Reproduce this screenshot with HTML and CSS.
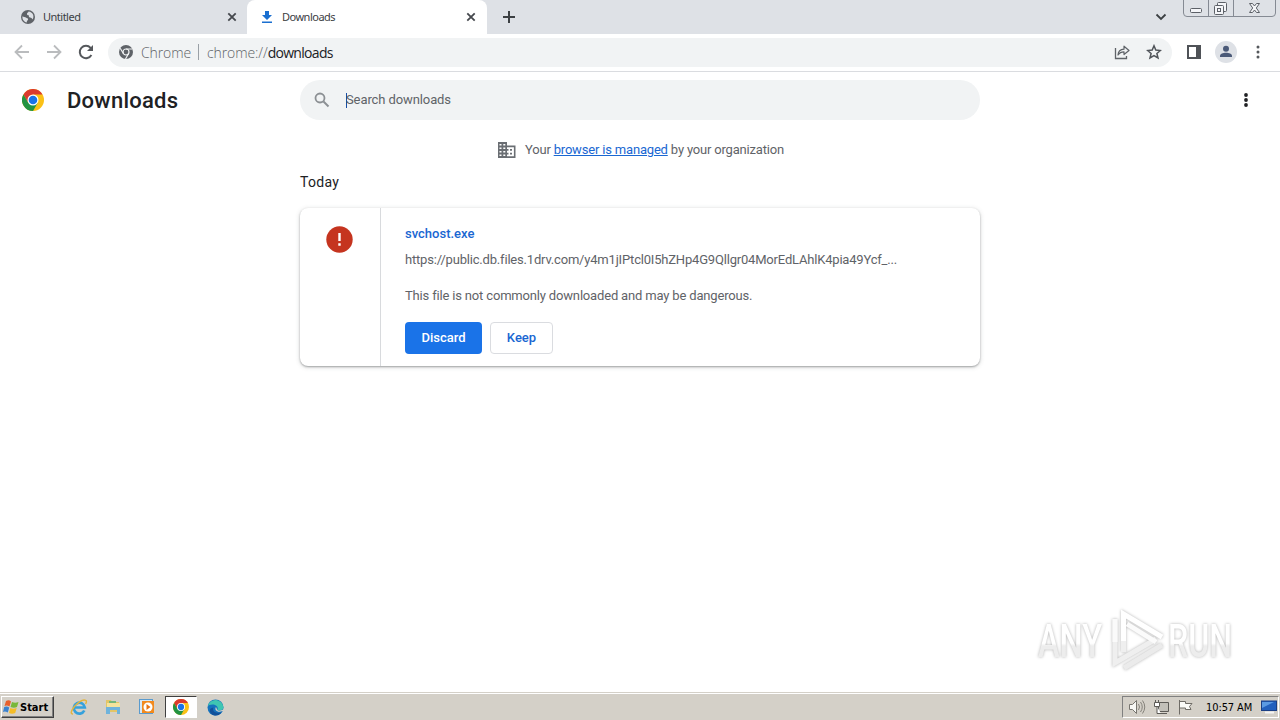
FILE: index.html
```html
<!DOCTYPE html>
<html lang="en">
<head>
    <meta charset="UTF-8">
    <meta name="viewport" content="width=device-width, initial-scale=1.0">
    <title>Downloads</title>
    <link rel="stylesheet" href="styles.css">
</head>
<body>
    <svg width="0" height="0" class="defs">
        <symbol id="chrome-logo" viewBox="0 0 24 24">
            <circle cx="12" cy="12" r="12" fill="#fbc116"/>
            <path d="M1.6 6A12 12 0 0 1 22.4 6H12L6.8 15Z" fill="#db3a2e"/>
            <path d="M1.6 6A12 12 0 0 0 12 24L17.2 15H6.8Z" fill="#229342"/>
            <circle cx="12" cy="12" r="6" fill="#fff"/>
            <circle cx="12" cy="12" r="4.7" fill="#1a73e8"/>
        </symbol>
        <symbol id="close" viewBox="0 0 10 10">
            <path d="M1.3 1.3L8.7 8.7M8.7 1.3L1.3 8.7" stroke="#45484d" stroke-width="1.8" fill="none"/>
        </symbol>
    </svg>

    <header class="tab-strip">
        <div class="tab">
            <svg class="favicon" width="16" height="16" viewBox="0 0 16 16">
                <circle cx="8" cy="8" r="7" fill="#5f6368"/>
                <path d="M2.5 7.2C3.5 8 5.2 7.7 6 8.6C6.6 9.3 8.2 9 8.1 10.3C8 11.4 6.8 11.5 6.7 13.5C4 12.8 2 10.5 2.5 7.2ZM8.5 2.5C10.5 2.7 12 3.7 13 5.5C13.7 7.4 13.4 9 12.7 10.5C12.2 9.3 11.4 8.6 10 8.4C9 8.2 8.6 7.3 9 6.4C7.8 6.3 6.6 5.5 7 4.4C7.3 3.7 8.3 3.6 8.5 2.5Z" fill="#dee1e6"/>
            </svg>
            <span class="tab-title">Untitled</span>
            <svg class="tab-close" width="10" height="10"><use href="#close"/></svg>
        </div>
        <div class="tab active">
            <svg class="favicon" width="16" height="16" viewBox="0 0 16 16">
                <path d="M6 2H10V6H13L8 11L3 6H6ZM3 12.5H13V14H3Z" fill="#1a6fd0"/>
            </svg>
            <span class="tab-title">Downloads</span>
            <svg class="tab-close" width="10" height="10"><use href="#close"/></svg>
        </div>
        <svg class="new-tab" width="14" height="14" viewBox="0 0 14 14">
            <path d="M7 1V13M1 7H13" stroke="#3c4043" stroke-width="2"/>
        </svg>
        <svg class="tab-search" width="12" height="8" viewBox="0 0 12 8">
            <path d="M1.5 1.5L6 6L10.5 1.5" stroke="#3c4043" stroke-width="1.8" fill="none"/>
        </svg>
        <svg class="window-buttons" width="94" height="18" viewBox="0 0 94 18">
            <path d="M.5 0V13Q.5 16.5 4 16.5H89Q92.5 16.5 92.5 13V0M25.5 0V16.5M50.5 0V16.5" fill="none" stroke="#858a93"/>
            <g fill="#f4f5f8" stroke="#5c6067">
                <rect x="7.5" y="8.5" width="11" height="4" rx="1"/>
                <rect x="34.500" y="2.5" width="9" height="9" rx="1"/>
                <rect x="31.5" y="5.5" width="9" height="9" rx="1"/>
                <rect x="34.5" y="8.5" width="3" height="3"/>
                <path d="M66.500 3.500H69.500L71.500 6L73.500 3.500H76.500L73.300 8L76.500 12.500H73.500L71.500 10L69.500 12.500H66.500L69.700 8Z"/>
            </g>
        </svg>
    </header>

    <nav class="toolbar">
        <svg class="nav-icon" width="16" height="16" viewBox="0 0 16 16">
            <path d="M15 8H2M8 1.5L1.5 8L8 14.5" fill="none" stroke="#babcbe" stroke-width="1.8"/>
        </svg>
        <svg class="nav-icon" width="16" height="16" viewBox="0 0 16 16">
            <path d="M1 8H14M8 1.5L14.5 8L8 14.5" fill="none" stroke="#babcbe" stroke-width="1.8"/>
        </svg>
        <svg class="nav-icon" width="16" height="16" viewBox="0 0 16 16">
            <path d="M13.4 11A6.2 6.2 0 1 1 12.6 3.8L14 5.2" fill="none" stroke="#55585c" stroke-width="2"/>
            <path d="M15 1V7H9Z" fill="#55585c"/>
        </svg>
        <div class="omnibox">
            <svg width="14" height="14" viewBox="0 0 14 14">
                <circle cx="7" cy="7" r="7" fill="#5f6368"/>
                <circle cx="7" cy="7" r="3" fill="none" stroke="#f1f3f4" stroke-width="1.2"/>
                <path d="M7 4H13.5M4.4 8.5L1.2 3.3M9.6 8.5L6.5 14" stroke="#f1f3f4" stroke-width="1.2"/>
            </svg>
            <span class="site">Chrome</span>
            <span class="divider"></span>
            <span class="url">chrome://<b>downloads</b></span>
            <svg class="share" width="16" height="16" viewBox="0 0 16 16">
                <path d="M1.5 4V14.5H12.5V12" fill="none" stroke="#5f6368" stroke-width="1.3"/>
                <path d="M4 11C4.2 7.5 6.5 5.3 10 5.2V2.2L15 6.5L10 10.5V7.8C7.3 7.8 5.3 8.9 4 11Z" fill="none" stroke="#5f6368" stroke-width="1.2" stroke-linejoin="round"/>
            </svg>
            <svg class="star" width="16" height="16" viewBox="0 0 16 16">
                <path d="M8 1.8L9.8 6.1L14.4 6.5L10.9 9.5L12 14L8 11.6L4 14L5.1 9.5L1.6 6.5L6.2 6.1Z" fill="none" stroke="#505459" stroke-width="1.5"/>
            </svg>
        </div>
        <svg class="side-panel" width="14" height="14" viewBox="0 0 14 14">
            <path d="M0 0H14V14H0ZM2 2V12H9V2Z" fill="#4f5257" fill-rule="evenodd"/>
        </svg>
        <svg class="avatar" width="22" height="22" viewBox="0 0 22 22">
            <circle cx="11" cy="11" r="11" fill="#dee1e6"/>
            <circle cx="11" cy="7.8" r="3" fill="#4b5a78"/>
            <path d="M5 16V15C5 13 8 11.8 11 11.8S17 13 17 15V16Z" fill="#4b5a78"/>
        </svg>
        <svg class="menu" width="4" height="14" viewBox="0 0 4 14" fill="#55585c">
            <circle cx="2" cy="2" r="1.5"/><circle cx="2" cy="7" r="1.5"/><circle cx="2" cy="12" r="1.5"/>
        </svg>
    </nav>

    <main>
        <div class="page-header">
            <svg class="logo" width="22" height="22"><use href="#chrome-logo"/></svg>
            <h1>Downloads</h1>
            <div class="search">
                <svg width="16" height="16" viewBox="0 0 16 16">
                    <circle cx="6" cy="6" r="4.5" fill="none" stroke="#8c9094" stroke-width="1.8"/>
                    <path d="M9.5 9.5L14.5 14.5" stroke="#8c9094" stroke-width="2"/>
                </svg>
                <span class="caret"></span>
                <span class="placeholder">Search downloads</span>
            </div>
            <svg class="more" width="4" height="14" viewBox="0 0 4 14" fill="#202124">
                <circle cx="2" cy="2" r="1.9"/><circle cx="2" cy="7" r="1.9"/><circle cx="2" cy="12" r="1.9"/>
            </svg>
        </div>

        <div class="managed">
            <svg width="18" height="16" viewBox="0 0 18 16">
                <path d="M0 0H9V3.5H17.5V16H0Z" fill="#6a6e73"/>
                <path d="M1.5 2H3.5V3.5H1.5ZM5.3 2H7.3V3.5H5.3ZM1.5 5.5H3.5V7H1.5ZM5.3 5.5H7.3V7H5.3ZM1.5 9H3.5V10.5H1.5ZM5.3 9H7.3V10.5H5.3ZM1.5 12.5H3.5V14H1.5ZM5.3 12.5H7.3V14H5.3ZM9 5.2H15.9V14.3H9V12.5H10.5V10.7H9V8.8H10.5V7H9Z" fill="#fff"/>
                <path d="M12 7H14V8.8H12ZM12 10.7H14V12.5H12Z" fill="#6a6e73"/>
            </svg>
            <span class="managed-text">Your <a href="#">browser is managed</a> by your organization</span>
        </div>

        <section class="downloads">
            <h2>Today</h2>
            <div class="card">
                <div class="card-icon">
                    <svg width="27" height="27" viewBox="0 0 27 27">
                        <circle cx="13.5" cy="13.5" r="13.2" fill="#c5341f"/>
                        <path d="M12.3 7H14.7V15H12.3ZM12.3 17.3H14.7V19.7H12.3Z" fill="#fff"/>
                    </svg>
                </div>
                <div class="card-content">
                    <div class="file-name">svchost.exe</div>
                    <div class="file-url">https://public.db.files.1drv.com/y4m1jIPtcl0I5hZHp4G9Qllgr04MorEdLAhlK4pia49Ycf_...</div>
                    <div class="warning">This file is not commonly downloaded and may be dangerous.</div>
                    <div class="buttons">
                        <button class="discard">Discard</button>
                        <button class="keep">Keep</button>
                    </div>
                </div>
            </div>
        </section>

        <svg class="watermark" width="210" height="74" viewBox="0 0 210 74">
            <defs>
                <linearGradient id="fade" x1="0" y1="0" x2="0" y2="1">
                    <stop offset="0.55" stop-color="#fff"/>
                    <stop offset="0.6" stop-color="#ededed"/>
                </linearGradient>
            </defs>
            <g fill="url(#fade)">
                <text x="8" y="55" textLength="64" lengthAdjust="spacingAndGlyphs">ANY</text>
                <text x="138" y="55" textLength="64" lengthAdjust="spacingAndGlyphs">RUN</text>
            </g>
            <g fill="none" stroke-width="5">
                <path d="M94 66L132 43" stroke="#ebebeb"/>
                <path d="M85 17V61L126 37" stroke="#efefef"/>
                <path d="M85 40V17" stroke="#fafafa"/>
                <path d="M93.5 50V32" stroke="#efefef"/>
                <path d="M97 22L126 40" stroke="#fbfbfb"/>
                <path d="M93.5 39V12L132 35" stroke="#fff"/>
            </g>
        </svg>
    </main>

    <footer class="taskbar">
        <div class="start">
            <svg width="17" height="16" viewBox="0 0 17 16">
                <path d="M3 2Q6 .5 8 2.5L6.5 7.5Q4 6 1.5 7Z" fill="#e8602c"/>
                <path d="M9 3Q12 4.5 15.5 3L14 8Q11 9.5 7.5 8Z" fill="#78b83a"/>
                <path d="M1.2 8Q4 7 6.2 8.5L4.8 13.5Q2 12 0 13Z" fill="#3a82cf"/>
                <path d="M7.3 9Q10 10.5 13.7 9L12.2 14Q9 15.5 6 14Z" fill="#f5bd27"/>
            </svg>
            <span>Start</span>
        </div>
        <div class="launch">
            <svg width="18" height="18" viewBox="0 0 18 18">
                <path d="M14.3 12.5A5.5 5.5 0 1 1 14.8 9.500H5" fill="none" stroke="#35a1dc" stroke-width="2.7"/>
                <path d="M3 16Q-1 16 4 9Q12 0 16 2.5Q17 4 15.5 6" fill="none" stroke="#e3b43d" stroke-width="1.4"/>
            </svg>
        </div>
        <div class="launch">
            <svg width="18" height="18" viewBox="0 0 18 18">
                <path d="M2 2H7L8 4H15V14H2Z" fill="#e3c567"/>
                <path d="M3 5H16V10H3Z" fill="#f5e39c"/>
                <path d="M5 3H12V5H5Z" fill="#75b77a"/>
                <path d="M2 9H16V16H13V12H6V16H2Z" fill="#6fb3dc"/>
            </svg>
        </div>
        <div class="launch">
            <svg width="18" height="18" viewBox="0 0 18 18">
                <rect x="1.5" y="1.5" width="13" height="14" fill="#d7e8f5" stroke="#5a9bce"/>
                <rect x="4" y="3" width="12" height="12" fill="#f28a1e"/>
                <circle cx="10" cy="9" r="4.500" fill="#fff"/>
                <path d="M8.500 6L12.500 9L8.500 12Z" fill="#e87412"/>
            </svg>
        </div>
        <div class="launch pressed">
            <svg width="16" height="16"><use href="#chrome-logo"/></svg>
        </div>
        <div class="launch">
            <svg width="17" height="17" viewBox="0 0 17 17">
                <circle cx="8.5" cy="8.5" r="8" fill="#1572bd"/>
                <path d="M.8 7A8 8 0 0 1 16.5 8C16.5 11 13 12 10.3 11C12 8 9 5.5 5.5 5.5C3 5.5 1.5 6.3.8 7Z" fill="#3fc6b2"/>
                <path d="M6.5 8.5C5 12 8 15 14.8 13.2Q11 18 6 16C2 14 1.5 9 6.5 8.5Z" fill="#12509a"/>
                <path d="M9 8C7.5 10 9 12.8 12.5 12.8L16 12L16.8 10.3C14 12 11 12 10.3 11Z" fill="#d4d0c8"/>
            </svg>
        </div>
        <div class="tray">
            <svg width="18" height="16" viewBox="0 0 18 16">
                <path d="M1.5 5.5H4.5L8.5 1.5V14.5L4.5 10.5H1.5Z" fill="#f7f7f4" stroke="#77756f"/>
                <path d="M10.5 5Q12.500 8 10.500 11M12.500 3Q16 8 12.500 13M14.500 1.500Q19 8 14.500 14.500" fill="none" stroke="#85827b"/>
            </svg>
            <svg width="17" height="16" viewBox="0 0 17 16">
                <path d="M5.500 3.500H15.500V12.500H5.500ZM7 14.500H14" fill="#c2c0b9" stroke="#5d5b57"/>
                <path d="M1.500 3.500H6.500V7.500H1.500ZM2.500 1V3.500M5.500 1V3.500M4 7.500V14.500H8" fill="#fff" stroke="#5d5b57"/>
            </svg>
            <svg width="17" height="16" viewBox="0 0 17 16">
                <path d="M2.5 1V15.5M2.5 2.5H8.5V4.5H15L12.5 7.5L14 10.5H8.5V9H2.5" fill="#fbfbf8" stroke="#6f6c66"/>
            </svg>
            <span class="clock">10:57 AM</span>
            <svg class="desktop" width="16" height="14" viewBox="0 0 16 14">
                <rect x=".5" y="1" width="15" height="9.5" fill="#2360bd" stroke="#1b3f85"/>
                <path d="M1 2L13 2L1 8Z" fill="#5b9ae3"/>
                <path d="M4 12.5H13" stroke="#f4f4f4" stroke-width="2"/>
            </svg>
        </div>
    </footer>
</body>
</html>
```
FILE: styles.css
```css
* {
    box-sizing: border-box;
}
body {
    margin: 0;
    width: 1280px;
    height: 720px;
    display: flex;
    flex-direction: column;
    overflow: hidden;
    background-color: #fff;
    font-family: Roboto, sans-serif;
    font-size: 13px;
    color: #5f6368;
}
svg {
    display: block;
    flex-shrink: 0;
}
.defs {
    position: absolute;
}
.tab-strip {
    height: 34px;
    display: flex;
    align-items: center;
    background-color: #dee1e6;
    flex-shrink: 0;
}
.tab {
    width: 247px;
    height: 34px;
    padding: 0 10px 0 20px;
    display: flex;
    align-items: center;
}
.tab.active {
    width: 240px;
    padding: 0 11px 0 12px;
    background-color: #fff;
    border-radius: 8px 8px 0 0;
}
.tab-title {
    margin-left: 7px;
    padding-bottom: 1px;
    font-family: "Noto Sans", sans-serif;
    font-size: 11px;
    letter-spacing: -0.5px;
    color: #3c4043;
}
.tab-close {
    margin-left: auto;
}
.new-tab {
    margin-left: 15px;
}
.tab-search {
    margin-left: auto;
}
.window-buttons {
    margin: 0 3px 0 16px;
    align-self: flex-start;
}
.toolbar {
    height: 38px;
    display: flex;
    align-items: center;
    flex-shrink: 0;
    padding: 0 20px 1px 14px;
    border-bottom: 1px solid #dadce0;
}
.nav-icon {
    margin-right: 16px;
}
.omnibox {
    width: 1064px;
    height: 29px;
    margin-left: -2px;
    padding: 0 10px 0 11px;
    display: flex;
    align-items: center;
    border-radius: 15px;
    background-color: #f1f3f4;
    font-family: "Open Sans", sans-serif;
    font-size: 14px;
    font-weight: 300;
}
.site {
    width: 49px;
    margin-left: 8px;
    letter-spacing: -0.1px;
}
.divider {
    width: 1px;
    height: 16px;
    margin: 0 8px;
    background-color: #9aa0a6;
}
.url {
    letter-spacing: -0.1px;
}
.url b {
    font-weight: 400;
    letter-spacing: -0.7px;
    color: #202124;
}
.share {
    margin-left: auto;
    margin-right: 16px;
}
.side-panel {
    margin-left: 15px;
}
.avatar {
    margin-left: 14px;
}
.menu {
    margin-left: auto;
}
main {
    flex: 1;
    position: relative;
    display: flex;
    flex-direction: column;
    align-items: center;
}
.page-header {
    width: 1280px;
    height: 56px;
    display: flex;
    align-items: center;
    padding: 0 32px 0 22px;
}
h1 {
    width: 233px;
    margin: 0 0 0 23px;
    font-size: 22px;
    font-weight: 500;
    letter-spacing: 0.25px;
    color: #202124;
}
.search {
    width: 680px;
    height: 40px;
    padding: 0 14px;
    display: flex;
    align-items: center;
    border-radius: 20px;
    background-color: #f1f3f4;
}
.caret {
    width: 1px;
    height: 15px;
    margin: 0 -1px 0 16px;
    background-color: #174ea6;
}
.placeholder {
    padding-bottom: 2px;
    letter-spacing: -0.1px;
}
.more {
    margin-left: auto;
}
.managed {
    height: 44px;
    margin-left: 2px;
    display: flex;
    align-items: center;
    gap: 9px;
}
.managed-text {
    padding-bottom: 2px;
    letter-spacing: -0.18px;
}
a {
    color: #1967d2;
}
.downloads {
    width: 680px;
}
h2 {
    margin: 0 0 16px;
    font-size: 14px;
    line-height: 20px;
    font-weight: 400;
    letter-spacing: 0.3px;
    color: #202124;
}
.card {
    height: 158px;
    display: flex;
    border-radius: 8px;
    box-shadow: 0 1px 2px rgba(60, 64, 67, 0.4), 0 1px 5px rgba(60, 64, 67, 0.2);
}
.card-icon {
    width: 81px;
    padding: 18px 0 0 26px;
    border-right: 1px solid #d8dadd;
}
.card-content {
    padding: 16px 24px;
    white-space: nowrap;
}
.file-name {
    line-height: 20px;
    font-weight: 500;
    color: #1967d2;
}
.file-url {
    margin-top: 6px;
    line-height: 20px;
    letter-spacing: -0.19px;
}
.warning {
    margin-top: 16px;
    line-height: 20px;
    letter-spacing: -0.17px;
}
.buttons {
    display: flex;
    gap: 8px;
    margin-top: 16px;
}
button {
    height: 32px;
    padding: 0 0 2px;
    border-radius: 4px;
    font-family: Roboto, sans-serif;
    font-size: 13px;
    font-weight: 500;
}
.discard {
    width: 77px;
    border: none;
    background-color: #1a73e8;
    color: #fff;
}
.keep {
    width: 63px;
    border: 1px solid #dadce0;
    background-color: #fff;
    color: #1967d2;
}
.watermark {
    position: absolute;
    right: 40px;
    bottom: 16px;
    overflow: visible;
    filter: drop-shadow(0 0 1.5px rgba(0, 0, 0, 0.3));
}
.watermark text {
    font-family: Roboto, sans-serif;
    font-size: 47px;
    font-weight: 500;
}
.taskbar {
    height: 28px;
    display: flex;
    align-items: center;
    flex-shrink: 0;
    padding: 1px 1px 0;
    background-color: #d4d0c8;
    border-top: 1px solid #d4d0c8;
    box-shadow: inset 0 1px #fff;
    font-family: "DejaVu Sans Condensed", "DejaVu Sans", sans-serif;
    font-size: 11px;
    color: #000;
}
.start {
    width: 53px;
    height: 22px;
    margin-right: 9px;
    padding-left: 1px;
    display: flex;
    align-items: center;
    border: 1px solid;
    border-color: #fff #404040 #404040 #fff;
    box-shadow: inset -1px -1px #808080;
    font-weight: bold;
}
.launch {
    width: 32px;
    height: 22px;
    margin-right: 2px;
    display: flex;
    align-items: center;
    justify-content: center;
}
.launch.pressed {
    border: 1px solid;
    border-color: #404040 #fff #fff #404040;
    background-color: #fff;
}
.tray {
    width: 157px;
    height: 22px;
    margin-left: auto;
    padding: 0 1px 0 5px;
    display: flex;
    align-items: center;
    gap: 7px;
    border: 1px solid;
    border-color: #808080 #fff #fff #808080;
}
.clock {
    margin-left: 5px;
    white-space: nowrap;
    letter-spacing: -0.1px;
}
.desktop {
    margin-left: auto;
}
```
